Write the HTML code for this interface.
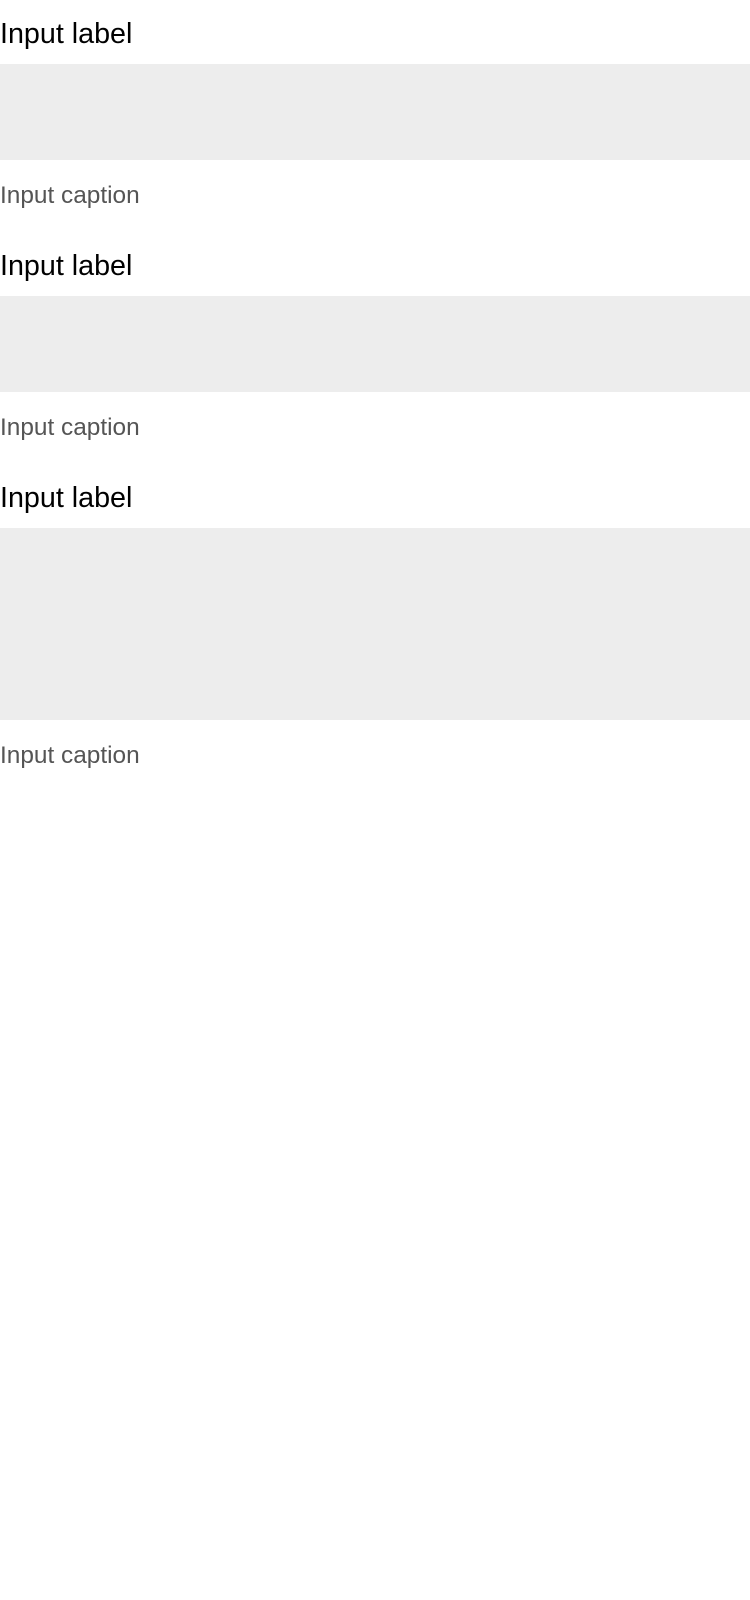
<!DOCTYPE html>
<html><head><meta charset="utf-8"><style>
html,body{margin:0;padding:0;background:#fff;width:750px;height:1600px;overflow:hidden}
body{font-family:"Liberation Sans",sans-serif}
.lab{position:absolute;left:0;font-size:28.7px;color:#000;line-height:1}
.cap{position:absolute;left:0;font-size:24.4px;color:#555;line-height:1}
.box{position:absolute;left:0;width:750px;background:#ededed}
</style></head><body>
<div class="lab" style="top:20px">Input label</div>
<div class="box" style="top:64px;height:96px"></div>
<div class="cap" style="top:184px">Input caption</div>
<div class="lab" style="top:252px">Input label</div>
<div class="box" style="top:296px;height:96px"></div>
<div class="cap" style="top:416px">Input caption</div>
<div class="lab" style="top:484px">Input label</div>
<div class="box" style="top:528px;height:192px"></div>
<div class="cap" style="top:744px">Input caption</div>
</body></html>
